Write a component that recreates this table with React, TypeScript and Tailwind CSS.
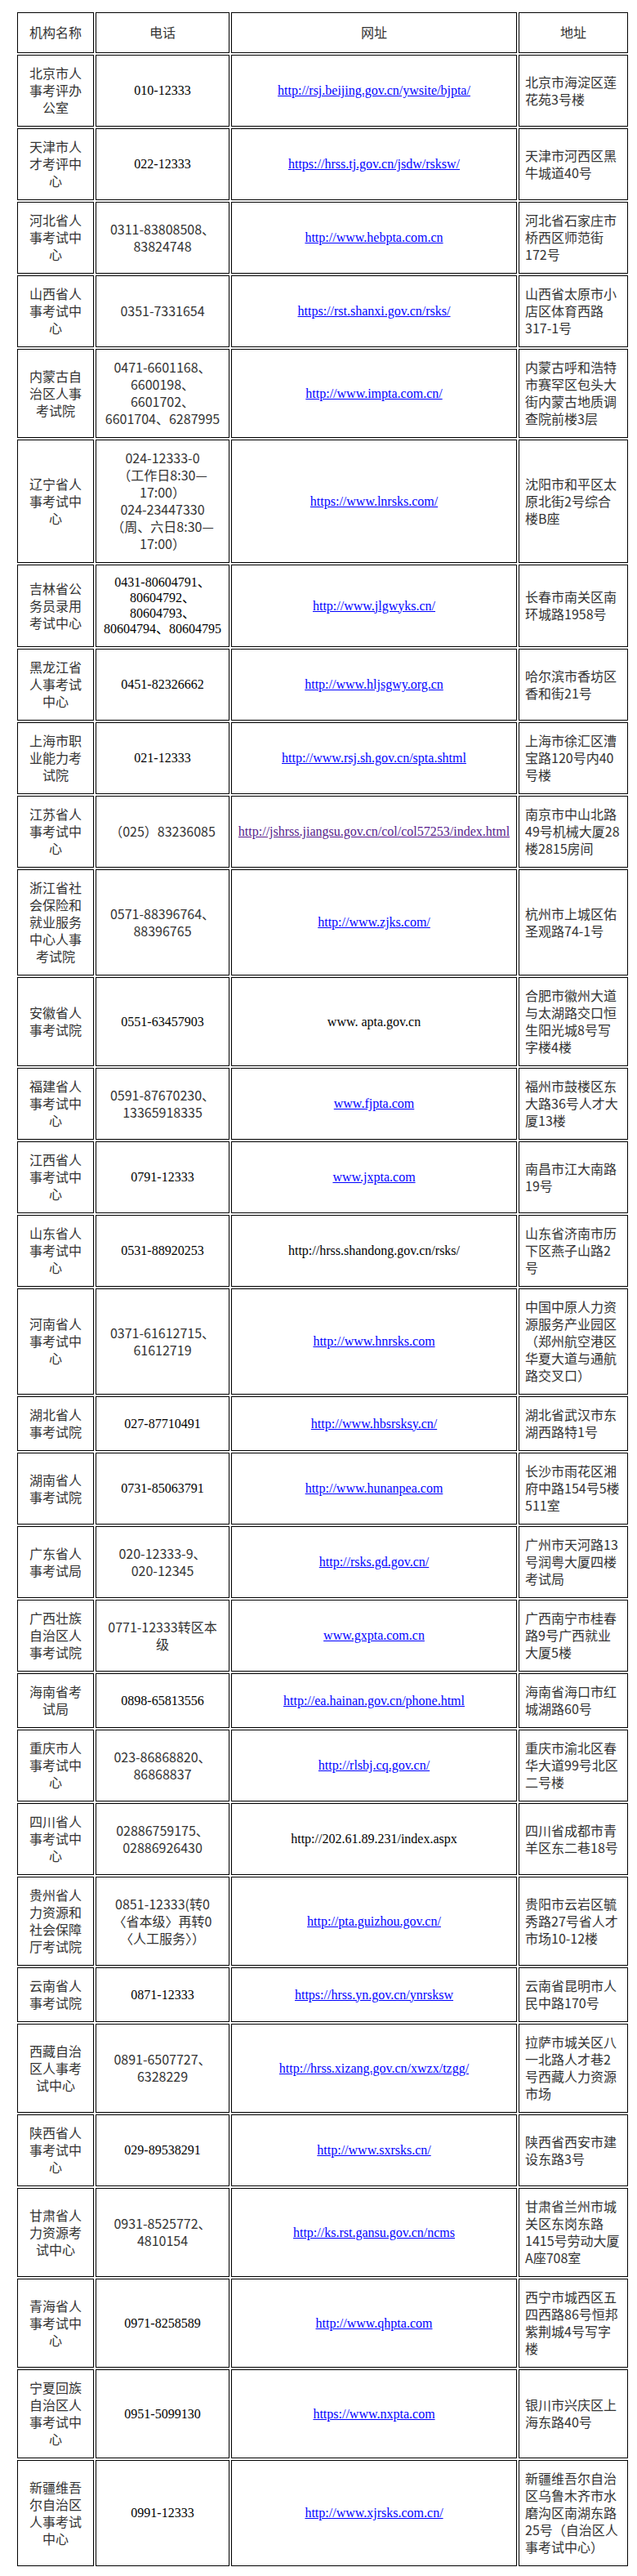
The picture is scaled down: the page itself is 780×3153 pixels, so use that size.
import React from "react";

type Phone = { f: "s" | "t"; l: string[] };
type Url = { t: string; k: "a" | "v" | "p" };
type Row = { n: string[]; p: Phone; u: Url; a: string[]; al?: string };

const rows: Row[] = [
  { n: ["北京市人", "事考评办", "公室"], p: { f: "t", l: ["010-12333"] }, u: { t: "http://rsj.beijing.gov.cn/ywsite/bjpta/", k: "a" }, a: ["北京市海淀区莲", "花苑3号楼"] },
  { n: ["天津市人", "才考评中", "心"], p: { f: "t", l: ["022-12333"] }, u: { t: "https://hrss.tj.gov.cn/jsdw/rsksw/", k: "a" }, a: ["天津市河西区黑", "牛城道40号"] },
  { n: ["河北省人", "事考试中", "心"], p: { f: "s", l: ["0311-83808508、", "83824748"] }, u: { t: "http://www.hebpta.com.cn", k: "a" }, a: ["河北省石家庄市", "桥西区师范街", "172号"] },
  { n: ["山西省人", "事考试中", "心"], p: { f: "s", l: ["0351-7331654"] }, u: { t: "https://rst.shanxi.gov.cn/rsks/", k: "a" }, a: ["山西省太原市小", "店区体育西路", "317-1号"] },
  { n: ["内蒙古自", "治区人事", "考试院"], p: { f: "s", l: ["0471-6601168、", "6600198、", "6601702、", "6601704、6287995"] }, u: { t: "http://www.impta.com.cn/", k: "a" }, a: ["内蒙古呼和浩特", "市赛罕区包头大", "街内蒙古地质调", "查院前楼3层"] },
  { n: ["辽宁省人", "事考试中", "心"], p: { f: "s", l: ["024-12333-0", "（工作日8:30—", "17:00）", "024-23447330", "（周、六日8:30—", "17:00）"] }, u: { t: "https://www.lnrsks.com/", k: "a" }, a: ["沈阳市和平区太", "原北街2号综合", "楼B座"] },
  { n: ["吉林省公", "务员录用", "考试中心"], p: { f: "t", l: ["0431-80604791、", "80604792、", "80604793、", "80604794、80604795"] }, u: { t: "http://www.jlgwyks.cn/", k: "a" }, a: ["长春市南关区南", "环城路1958号"] },
  { n: ["黑龙江省", "人事考试", "中心"], p: { f: "t", l: ["0451-82326662"] }, u: { t: "http://www.hljsgwy.org.cn", k: "a" }, a: ["哈尔滨市香坊区", "香和街21号"] },
  { n: ["上海市职", "业能力考", "试院"], p: { f: "t", l: ["021-12333"] }, u: { t: "http://www.rsj.sh.gov.cn/spta.shtml", k: "a" }, a: ["上海市徐汇区漕", "宝路120号内40", "号楼"] },
  { n: ["江苏省人", "事考试中", "心"], p: { f: "s", l: ["（025）83236085"] }, u: { t: "http://jshrss.jiangsu.gov.cn/col/col57253/index.html", k: "v" }, a: ["南京市中山北路", "49号机械大厦28", "楼2815房间"] },
  { n: ["浙江省社", "会保险和", "就业服务", "中心人事", "考试院"], p: { f: "s", l: ["0571-88396764、", "88396765"] }, u: { t: "http://www.zjks.com/", k: "a" }, a: ["杭州市上城区佑", "圣观路74-1号"] },
  { n: ["安徽省人", "事考试院"], p: { f: "t", l: ["0551-63457903"] }, u: { t: "www. apta.gov.cn", k: "p" }, a: ["合肥市徽州大道", "与太湖路交口恒", "生阳光城8号写", "字楼4楼"] },
  { n: ["福建省人", "事考试中", "心"], p: { f: "s", l: ["0591-87670230、", "13365918335"] }, u: { t: "www.fjpta.com", k: "a" }, a: ["福州市鼓楼区东", "大路36号人才大", "厦13楼"] },
  { n: ["江西省人", "事考试中", "心"], p: { f: "t", l: ["0791-12333"] }, u: { t: "www.jxpta.com", k: "a" }, a: ["南昌市江大南路", "19号"] },
  { n: ["山东省人", "事考试中", "心"], p: { f: "t", l: ["0531-88920253"] }, u: { t: "http://hrss.shandong.gov.cn/rsks/", k: "p" }, a: ["山东省济南市历", "下区燕子山路2", "号"] },
  { n: ["河南省人", "事考试中", "心"], p: { f: "s", l: ["0371-61612715、", "61612719"] }, u: { t: "http://www.hnrsks.com", k: "a" }, a: ["中国中原人力资", "源服务产业园区", "（郑州航空港区", "华夏大道与通航", "路交叉口）"] },
  { n: ["湖北省人", "事考试院"], p: { f: "t", l: ["027-87710491"] }, u: { t: "http://www.hbsrsksy.cn/", k: "a" }, a: ["湖北省武汉市东", "湖西路特1号"] },
  { n: ["湖南省人", "事考试院"], p: { f: "t", l: ["0731-85063791"] }, u: { t: "http://www.hunanpea.com", k: "a" }, a: ["长沙市雨花区湘", "府中路154号5楼", "511室"] },
  { n: ["广东省人", "事考试局"], p: { f: "s", l: ["020-12333-9、", "020-12345"] }, u: { t: "http://rsks.gd.gov.cn/", k: "a" }, a: ["广州市天河路13", "号润粤大厦四楼", "考试局"] },
  { n: ["广西壮族", "自治区人", "事考试院"], p: { f: "s", l: ["0771-12333转区本", "级"] }, u: { t: "www.gxpta.com.cn", k: "a" }, a: ["广西南宁市桂春", "路9号广西就业", "大厦5楼"] },
  { n: ["海南省考", "试局"], p: { f: "t", l: ["0898-65813556"] }, u: { t: "http://ea.hainan.gov.cn/phone.html", k: "a" }, a: ["海南省海口市红", "城湖路60号"] },
  { n: ["重庆市人", "事考试中", "心"], p: { f: "s", l: ["023-86868820、", "86868837"] }, u: { t: "http://rlsbj.cq.gov.cn/", k: "a" }, a: ["重庆市渝北区春", "华大道99号北区", "二号楼"] },
  { n: ["四川省人", "事考试中", "心"], p: { f: "s", l: ["02886759175、", "02886926430"] }, u: { t: "http://202.61.89.231/index.aspx", k: "p" }, a: ["四川省成都市青", "羊区东二巷18号"] },
  { n: ["贵州省人", "力资源和", "社会保障", "厅考试院"], p: { f: "s", l: ["0851-12333(转0", "〈省本级〉再转0", "〈人工服务〉）"] }, u: { t: "http://pta.guizhou.gov.cn/", k: "a" }, a: ["贵阳市云岩区毓", "秀路27号省人才", "市场10-12楼"] },
  { n: ["云南省人", "事考试院"], p: { f: "t", l: ["0871-12333"] }, u: { t: "https://hrss.yn.gov.cn/ynrsksw", k: "a" }, a: ["云南省昆明市人", "民中路170号"] },
  { n: ["西藏自治", "区人事考", "试中心"], p: { f: "s", l: ["0891-6507727、", "6328229"] }, u: { t: "http://hrss.xizang.gov.cn/xwzx/tzgg/", k: "a" }, a: ["拉萨市城关区八", "一北路人才巷2", "号西藏人力资源", "市场"], al: "leading-[18px]" },
  { n: ["陕西省人", "事考试中", "心"], p: { f: "t", l: ["029-89538291"] }, u: { t: "http://www.sxrsks.cn/", k: "a" }, a: ["陕西省西安市建", "设东路3号"] },
  { n: ["甘肃省人", "力资源考", "试中心"], p: { f: "s", l: ["0931-8525772、", "4810154"] }, u: { t: "http://ks.rst.gansu.gov.cn/ncms", k: "a" }, a: ["甘肃省兰州市城", "关区东岗东路", "1415号劳动大厦", "A座708室"] },
  { n: ["青海省人", "事考试中", "心"], p: { f: "t", l: ["0971-8258589"] }, u: { t: "http://www.qhpta.com", k: "a" }, a: ["西宁市城西区五", "四西路86号恒邦", "紫荆城4号写字", "楼"] },
  { n: ["宁夏回族", "自治区人", "事考试中", "心"], p: { f: "t", l: ["0951-5099130"] }, u: { t: "https://www.nxpta.com", k: "a" }, a: ["银川市兴庆区上", "海东路40号"] },
  { n: ["新疆维吾", "尔自治区", "人事考试", "中心"], p: { f: "t", l: ["0991-12333"] }, u: { t: "http://www.xjrsks.com.cn/", k: "a" }, a: ["新疆维吾尔自治", "区乌鲁木齐市水", "磨沟区南湖东路", "25号（自治区人", "事考试中心）"] },
];

const sans = "font-['Noto_Sans_CJK_SC','Noto_Sans',sans-serif] text-[#333333] text-[16px] leading-[21px]";
const serif = "font-['Liberation_Serif','Noto_Sans_CJK_SC',serif] text-black text-[16px] leading-[19px]";

function Lines({ lines }: { lines: string[] }) {
  return (
    <div>
      {lines.map((l, i) => (
        <div key={i} className="whitespace-nowrap">
          {l}
        </div>
      ))}
    </div>
  );
}

const cell = "border border-black flex items-center pt-[11px] pb-[12px]";

export default function App() {
  return (
    <div className="min-h-[3153px] bg-white pt-[15px] pl-[21px]">
      <div className="grid w-[748px] grid-cols-[94px_164px_350px_134px] gap-[2px]">
        {["机构名称", "电话", "网址", "地址"].map((h) => (
          <div key={h} className={`border border-black flex items-center justify-center pt-[13px] pb-[14px] ${sans}`}>
            {h}
          </div>
        ))}
        {rows.map((r, i) => (
          <React.Fragment key={i}>
            <div className={`${cell} justify-center text-center ${sans}`}>
              <Lines lines={r.n} />
            </div>
            <div className={`${cell} justify-center text-center ${r.p.f === "s" ? sans : serif}`}>
              <Lines lines={r.p.l} />
            </div>
            <div className={`${cell} justify-center text-center ${serif}`}>
              {r.u.k === "p" ? (
                <span className="whitespace-nowrap">{r.u.t}</span>
              ) : (
                <a
                  href="#"
                  className={`whitespace-nowrap underline ${r.u.k === "v" ? "text-[#551a8b]" : "text-[#0000ff]"}`}
                >
                  {r.u.t}
                </a>
              )}
            </div>
            <div className={`${cell} justify-start text-left pl-[7px] ${sans} ${r.al ?? ""}`}>
              <Lines lines={r.a} />
            </div>
          </React.Fragment>
        ))}
      </div>
    </div>
  );
}
